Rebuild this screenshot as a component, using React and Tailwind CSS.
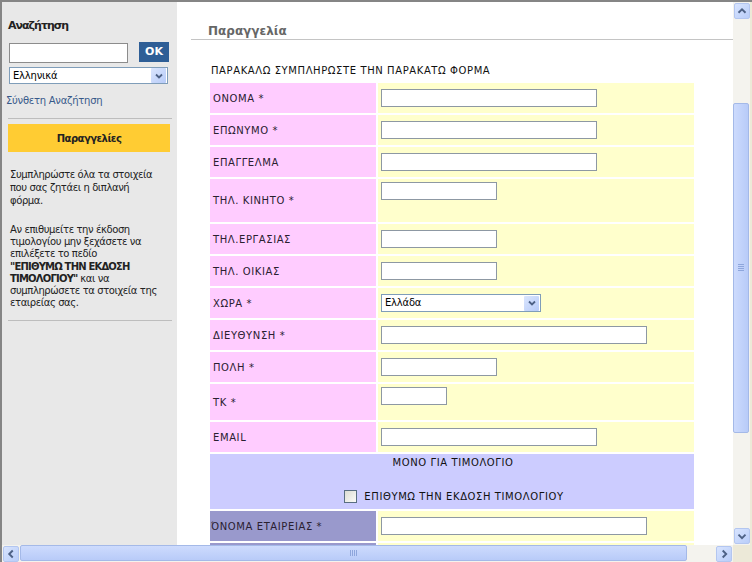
import React from 'react';

const font = { fontFamily: '"DejaVu Sans", Verdana, sans-serif' };

// rows of the order form
const rows = [
  { label: 'ΟΝΟΜΑ *', w: 'w-[216px]' },
  { label: 'ΕΠΩΝΥΜΟ *', w: 'w-[216px]' },
  { label: 'ΕΠΑΓΓΕΛΜΑ', w: 'w-[216px]' },
  { label: 'ΤΗΛ. ΚΙΝΗΤΟ *', w: 'w-[116px]', h: 'h-[43px]', top: true },
  { label: 'ΤΗΛ.ΕΡΓΑΣΙΑΣ', w: 'w-[116px]' },
  { label: 'ΤΗΛ. ΟΙΚΙΑΣ', w: 'w-[116px]' },
  { label: 'ΧΩΡΑ *', select: true },
  { label: 'ΔΙΕΥΘΥΝΣΗ *', w: 'w-[266px]' },
  { label: 'ΠΟΛΗ *', w: 'w-[116px]' },
  { label: 'ΤΚ *', w: 'w-[66px]', h: 'h-[36px]', top: true },
  { label: 'EMAIL', w: 'w-[216px]' },
];

const Chevron = ({ dir = 'down' }) => {
  const d = {
    down: 'M4 6.5 L8 10.5 L12 6.5',
    up: 'M4 10 L8 6 L12 10',
    left: 'M10 4 L6 8 L10 12',
    right: 'M6.5 4 L10.5 8 L6.5 12',
  }[dir];
  return (
    <svg width="16" height="16" viewBox="0 0 16 16">
      <path d={d} fill="none" stroke="#4d6185" strokeWidth="2.2" />
    </svg>
  );
};

const ArrowBtn = ({ dir }) => (
  <div className="w-[16px] h-[16px] flex items-center justify-center rounded-[2px] border border-[#b3c6f0] bg-gradient-to-br from-[#d8e4fe] to-[#b9cdf9]">
    <Chevron dir={dir} />
  </div>
);

const FakeSelect = ({ value, className }) => (
  <div className={`flex items-center justify-between bg-white border border-[#7f9db9] ${className}`}>
    <span className="pl-[3px] text-[10px] text-black leading-none tracking-[-0.2px]">{value}</span>
    <div className="w-[15px] h-[15px] mr-[1px] flex items-center justify-center rounded-[1px] bg-gradient-to-br from-[#dbe6fe] to-[#b7cbf8]">
      <svg width="10" height="10" viewBox="0 0 10 10">
        <path d="M2 3.5 L5 6.5 L8 3.5" fill="none" stroke="#4d6185" strokeWidth="1.8" />
      </svg>
    </div>
  </div>
);

const Sidebar = () => (
  <div className="w-[175px] shrink-0 bg-[#e8e8e8] pl-[6px] pr-[5px] text-[#222]">
    <div className="pt-[17px] text-[11px] font-bold leading-[14px] tracking-[-1px]">Αναζήτηση</div>
    <div className="flex items-start mt-[9px]">
      <div className="ml-[1px] mt-[1px] w-[119px] h-[20px] bg-white border border-[#8c8c8c]"></div>
      <div className="ml-[11px] w-[30px] h-[20px] bg-[#2e5e96] text-white text-[11px] font-bold flex items-center justify-center">OK</div>
    </div>
    <FakeSelect value="Ελληνικά" className="ml-[1px] mt-[4px] w-[159px] h-[17px]" />
    <div className="mt-[11px] -ml-[2px] text-[10px] leading-[12px] tracking-[-0.25px] text-[#37598a]">Σύνθετη Αναζήτηση</div>
    <div className="mt-[11px] h-px bg-[#bdbdbd]"></div>
    <div className="mt-[5px] w-[162px] h-[28px] bg-[#ffcc33] text-[10px] font-bold tracking-[-0.5px] flex items-center justify-center">Παραγγελίες</div>
    <p className="mt-[16px] pl-[2px] text-[10px] leading-[13px] tracking-[-0.4px]">
      Συμπληρώστε όλα τα στοιχεία<br />που σας ζητάει η διπλανή<br />φόρμα.
    </p>
    <p className="mt-[17px] pl-[2px] text-[10px] leading-[12.2px] tracking-[-0.4px]">
      Αν επιθυμείτε την έκδοση<br />τιμολογίου μην ξεχάσετε να<br />επιλέξετε το πεδίο<br />
      <b className="tracking-[-0.8px]">"ΕΠΙΘΥΜΩ ΤΗΝ ΕΚΔΟΣΗ<br />ΤΙΜΟΛΟΓΙΟΥ"</b> και να<br />συμπληρώσετε τα στοιχεία της<br />εταιρείας σας.
    </p>
    <div className="mt-[11px] h-px bg-[#bdbdbd]"></div>
  </div>
);

const FormRow = ({ row, dark }) => (
  <>
    <div className={`${row.h || 'h-[30px]'} ${dark ? 'bg-[#9999cc] pl-[1px]' : 'bg-[#ffccff] pl-[3px]'} flex items-center text-[10px] tracking-[0.6px] text-[#2a2030]`}>
      {row.label}
    </div>
    <div className={`${row.h || 'h-[30px]'} bg-[#ffffcc] flex ${row.top ? 'items-start pt-[3px]' : 'items-center'} pl-[3px]`}>
      {row.select ? (
        <FakeSelect value="Ελλάδα" className="w-[160px] h-[18px]" />
      ) : row.w ? (
        <div className={`${row.w} h-[18px] bg-white border border-[#8d98a3]`}></div>
      ) : null}
    </div>
  </>
);

const Main = () => (
  <div className="flex-1 bg-white overflow-hidden">
    <div className="pt-[22px] pl-[14px]">
      <div className="pl-[17px] pb-[1px] border-b border-[#c4c4c4] text-[12px] font-bold leading-[14px] text-[#666]">Παραγγελία</div>
    </div>
    <div className="pl-[33px]">
      <div className="mt-[25px] pl-[1px] text-[10px] leading-[12px] tracking-[0.6px] text-[#111]">ΠΑΡΑΚΑΛΩ ΣΥΜΠΛΗΡΩΣΤΕ ΤΗΝ ΠΑΡΑΚΑΤΩ ΦΟΡΜΑ</div>
      <div className="mt-[6px] w-[484px] grid grid-cols-[166px_316px] gap-[2px]">
        {rows.map(r => <FormRow key={r.label} row={r} />)}
        <div className="col-span-2 h-[55px] bg-[#ccccff] flex flex-col items-center pt-[3px] text-[10px] tracking-[0.6px] text-[#111]">
          <div className="leading-[12px] ml-[2px]">ΜΟΝΟ ΓΙΑ ΤΙΜΟΛΟΓΙΟ</div>
          <div className="mt-[21px] flex items-center ml-[4px]">
            <div className="w-[13px] h-[13px] border border-[#5a6e82] bg-gradient-to-br from-[#dcdcd4] to-[#fbfbf8]"></div>
            <span className="ml-[7px] leading-[12px]">ΕΠΙΘΥΜΩ ΤΗΝ ΕΚΔΟΣΗ ΤΙΜΟΛΟΓΙΟΥ</span>
          </div>
        </div>
        <FormRow row={{ label: 'ΌΝΟΜΑ ΕΤΑΙΡΕΙΑΣ *', w: 'w-[266px]' }} dark />
        <FormRow row={{ label: '' }} dark />
      </div>
    </div>
  </div>
);

const Grip = ({ vertical }) => (
  <svg width="8" height="8" viewBox="0 0 8 8">
    {[0, 2, 4, 6].map(i =>
      vertical ? (
        <line key={i} x1="1" x2="7" y1={i + 0.5} y2={i + 0.5} stroke="#8ea6dc" strokeWidth="1" />
      ) : (
        <line key={i} x1={i + 0.5} x2={i + 0.5} y1="1" y2="7" stroke="#8ea6dc" strokeWidth="1" />
      )
    )}
  </svg>
);

const VScroll = () => (
  <div className="w-[17px] shrink-0 bg-[#f4f3ee] flex flex-col items-center py-[1px]">
    <ArrowBtn dir="up" />
    <div className="flex-1 w-full relative">
      <div className="absolute left-[0px] w-[16px] top-[84px] h-[330px] rounded-[2px] border border-[#a4b9e8] bg-gradient-to-r from-[#cddbfd] to-[#b8cbf8] flex items-center justify-center">
        <Grip vertical />
      </div>
    </div>
    <ArrowBtn dir="down" />
  </div>
);

const HScroll = () => (
  <div className="flex h-[17px]">
    <div className="flex-1 bg-[#f4f3ee] flex items-center px-[1px]">
      <ArrowBtn dir="left" />
      <div className="flex-1 h-full relative">
        <div className="absolute top-[0px] h-[16px] left-[1px] w-[667px] rounded-[2px] border border-[#a4b9e8] bg-gradient-to-b from-[#cddbfd] to-[#b8cbf8] flex items-center justify-center">
          <Grip />
        </div>
      </div>
      <ArrowBtn dir="right" />
    </div>
    <div className="w-[17px] bg-[#ece9d8]"></div>
  </div>
);

const App = () => (
  <div style={font} className="w-[752px] h-[562px] overflow-hidden bg-[#ece9d8] border-t-2 border-l-2 border-[#858585] pr-[2px]">
    <div className="flex h-[543px]">
      <Sidebar />
      <Main />
      <VScroll />
    </div>
    <HScroll />
  </div>
);

export default App;
